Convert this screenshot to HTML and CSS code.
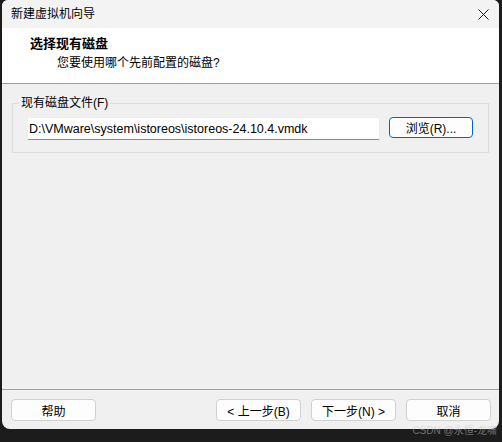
FILE: index.html
```html
<!DOCTYPE html>
<html lang="zh">
<head>
    <meta charset="UTF-8">
    <title>新建虚拟机向导</title>
    <link rel="stylesheet" href="styles.css">
</head>
<body>

<div class="window">
    <div class="titlebar">
        <span class="title">新建虚拟机向导</span>
        <span class="close">
            <svg width="11" height="11" viewBox="0 0 11 11">
                <path d="M0.5 0.5 L10.5 10.5 M10.5 0.5 L0.5 10.5" stroke="#1a1a1a" stroke-width="1" fill="none"/>
            </svg>
        </span>
    </div>

    <div class="header">
        <div class="header-title">选择现有磁盘</div>
        <div class="header-sub">您要使用哪个先前配置的磁盘?</div>
    </div>

    <div class="content">
        <fieldset class="group">
            <legend>现有磁盘文件(F)</legend>
            <div class="file-row">
                <input class="file-input" value="D:\VMware\system\istoreos\istoreos-24.10.4.vmdk">
                <button class="btn btn-default">浏览(R)...</button>
            </div>
        </fieldset>
    </div>

    <div class="footer">
        <button class="btn">帮助</button>
        <div class="spacer"></div>
        <button class="btn">&lt; 上一步(B)</button>
        <button class="btn">下一步(N) &gt;</button>
        <button class="btn">取消</button>
    </div>
</div>

<div class="watermark">CSDN @永恒-龙啸</div>

</body>
</html>
```

FILE: styles.css
```css
html, body {
    margin: 0;
    padding: 0;
}

body {
    background: #1c1c1c;
    width: 502px;
    height: 442px;
    overflow: hidden;
    position: relative;
    font-family: "Liberation Sans", "Noto Sans CJK SC", sans-serif;
    font-size: 12px;
    color: #000;
}

.window {
    margin-left: 2px;
    width: 497px;
    height: 429px;
    background: #f0f0f0;
    border-radius: 6px 6px 8px 8px;
    overflow: hidden;
    display: flex;
    flex-direction: column;
}

.titlebar {
    height: 28px;
    background: #f3f3f3;
    display: flex;
    align-items: center;
    justify-content: space-between;
    padding: 0 10px 0 9px;
    flex-shrink: 0;
}

.title {
    font-size: 12px;
    line-height: 14px;
}

.close {
    display: flex;
    padding-top: 1px;
}

.header {
    height: 56px;
    background: #fff;
    border-bottom: 1px solid #a0a0a0;
    flex-shrink: 0;
    padding-top: 9px;
    box-sizing: border-box;
}

.header-title {
    font-weight: bold;
    font-size: 13px;
    line-height: 14px;
    padding-left: 28px;
}

.header-sub {
    font-size: 12px;
    line-height: 14px;
    padding-left: 55px;
    margin-top: 5px;
}

.content {
    flex: 1;
    padding: 12px 10px 0 10px;
    border-bottom: 1px solid #a0a0a0;
}

.group {
    margin: 0;
    padding: 7px 15px 12px 14px;
    border: 1px solid #dcdcdc;
    width: 477px;
    box-sizing: border-box;
}

.group legend {
    margin-left: -8px;
    padding: 0 2px;
    font-size: 12px;
    line-height: 14px;
}

.file-row {
    display: flex;
    gap: 9px;
    align-items: flex-start;
}

.file-input {
    width: 353px;
    height: 23px;
    box-sizing: border-box;
    margin: 0;
    padding: 0 1px;
    border: 1px solid #ececec;
    border-bottom: 1px solid #8a8a8a;
    border-radius: 2px;
    background: #fff;
    font-family: inherit;
    font-size: 12.5px;
    color: #000;
    outline: none;
}

.btn {
    width: 85px;
    height: 22px;
    box-sizing: border-box;
    margin: 0;
    padding: 0;
    background: #fdfdfd;
    border: 1px solid #d0d0d0;
    border-radius: 4px;
    font-family: inherit;
    font-size: 12px;
    color: #000;
}

.btn-default {
    width: 84px;
    height: 21px;
    border: 1px solid #0067c0;
}

.footer {
    height: 39px;
    box-sizing: border-box;
    padding: 9px 8px 0 9px;
    display: flex;
    gap: 10px;
    flex-shrink: 0;
}

.spacer {
    flex: 1;
}

.watermark {
    position: absolute;
    right: 5px;
    top: 425px;
    font-size: 10px;
    line-height: 11px;
    color: rgba(200, 200, 200, 0.5);
}
```
